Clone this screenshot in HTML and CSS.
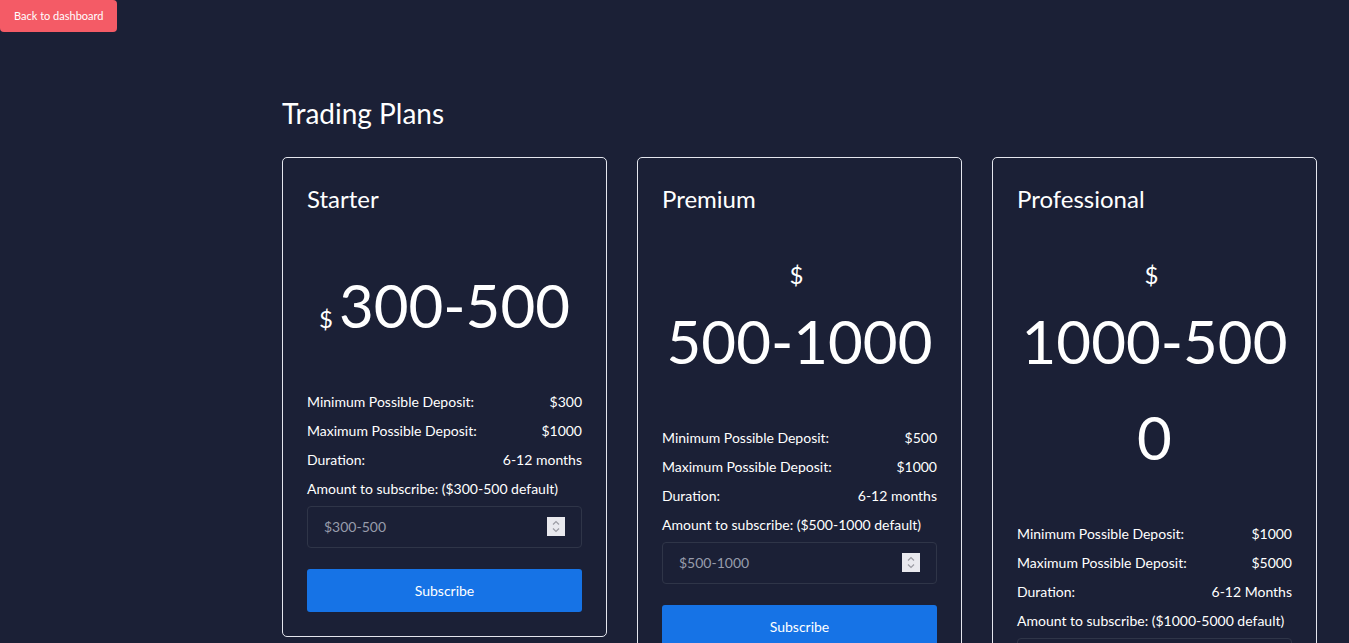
FILE: index.html
```html
<!DOCTYPE html>
<html lang="en">
<head>
<meta charset="utf-8">
<title>Trading Plans</title>
<link rel="stylesheet" href="styles.css">
</head>
<body>
<a class="back-btn" href="#">Back to dashboard</a>
<main class="plans">
  <h2 class="plans-title">Trading Plans</h2>
  <div class="plan-grid">
    <div class="plan-card">
      <h3 class="plan-name">Starter</h3>
      <div class="plan-price"><span class="currency">$</span><span class="amount">300-500</span></div>
      <div class="plan-row"><span>Minimum Possible Deposit:</span><span>$300</span></div>
      <div class="plan-row"><span>Maximum Possible Deposit:</span><span>$1000</span></div>
      <div class="plan-row"><span>Duration:</span><span>6-12 months</span></div>
      <label class="plan-label">Amount to subscribe: ($300-500 default)</label>
      <div class="input-wrap">
        <input class="plan-input" type="text" placeholder="$300-500">
        <span class="spinner"><svg width="18" height="19" viewBox="0 0 18 19"><rect width="18" height="19" fill="#e9e9ee"/><path d="M6 7.5 L9 4.5 L12 7.5" fill="none" stroke="#9b9ba3" stroke-width="1.2"/><path d="M6 11.5 L9 14.5 L12 11.5" fill="none" stroke="#9b9ba3" stroke-width="1.2"/></svg></span>
      </div>
      <button class="subscribe-btn">Subscribe</button>
    </div>
    <div class="plan-card">
      <h3 class="plan-name">Premium</h3>
      <div class="plan-price"><span class="currency">$</span><span class="amount">500-1000</span></div>
      <div class="plan-row"><span>Minimum Possible Deposit:</span><span>$500</span></div>
      <div class="plan-row"><span>Maximum Possible Deposit:</span><span>$1000</span></div>
      <div class="plan-row"><span>Duration:</span><span>6-12 months</span></div>
      <label class="plan-label">Amount to subscribe: ($500-1000 default)</label>
      <div class="input-wrap">
        <input class="plan-input" type="text" placeholder="$500-1000">
        <span class="spinner"><svg width="18" height="19" viewBox="0 0 18 19"><rect width="18" height="19" fill="#e9e9ee"/><path d="M6 7.5 L9 4.5 L12 7.5" fill="none" stroke="#9b9ba3" stroke-width="1.2"/><path d="M6 11.5 L9 14.5 L12 11.5" fill="none" stroke="#9b9ba3" stroke-width="1.2"/></svg></span>
      </div>
      <button class="subscribe-btn">Subscribe</button>
    </div>
    <div class="plan-card">
      <h3 class="plan-name">Professional</h3>
      <div class="plan-price"><span class="currency">$</span><span class="amount">1000-5000</span></div>
      <div class="plan-row"><span>Minimum Possible Deposit:</span><span>$1000</span></div>
      <div class="plan-row"><span>Maximum Possible Deposit:</span><span>$5000</span></div>
      <div class="plan-row"><span>Duration:</span><span>6-12 Months</span></div>
      <label class="plan-label">Amount to subscribe: ($1000-5000 default)</label>
      <div class="input-wrap">
        <input class="plan-input" type="text" placeholder="$1000-5000">
        <span class="spinner"><svg width="18" height="19" viewBox="0 0 18 19"><rect width="18" height="19" fill="#e9e9ee"/><path d="M6 7.5 L9 4.5 L12 7.5" fill="none" stroke="#9b9ba3" stroke-width="1.2"/><path d="M6 11.5 L9 14.5 L12 11.5" fill="none" stroke="#9b9ba3" stroke-width="1.2"/></svg></span>
      </div>
      <button class="subscribe-btn">Subscribe</button>
    </div>
  </div>
</main>
</body>
</html>
```
FILE: styles.css
```css
* { box-sizing: border-box; }
html, body { margin: 0; padding: 0; }
body {
  background: #1b2036;
  color: #ffffff;
  font-family: Lato, "Open Sans", "Liberation Sans", sans-serif;
  font-size: 14px;
  line-height: 1.5;
  min-height: 643px;
}
.back-btn {
  display: inline-block;
  height: 32px;
  line-height: 32px;
  padding: 0 14px;
  background: #f45b66;
  color: #fff;
  font-size: 11px;
  text-decoration: none;
  border-radius: 0 4px 4px 4px;
}
.plans {
  padding: 0 32px 0 282px;
}
.plans-title {
  margin: 65px 0 26px;
  font-size: 28px;
  font-weight: 400;
  line-height: 1.2;
  color: #fff;
}
.plan-grid {
  display: flex;
  gap: 30px;
  align-items: flex-start;
}
.plan-card {
  width: 325px;
  flex: 0 0 325px;
  border: 1px solid #e4e6ee;
  border-radius: 5px;
  padding: 24px;
}
.plan-name {
  margin: 0;
  font-size: 24px;
  font-weight: 400;
  line-height: 34px;
}
.plan-price {
  display: flex;
  flex-wrap: wrap;
  justify-content: center;
  align-items: baseline;
  margin: 41px 0 38px;
}
.currency {
  font-size: 24px;
  line-height: 36px;
  margin-right: 6px;
}
.amount {
  font-size: 60px;
  line-height: 96px;
  text-align: center;
  word-break: break-all;
  min-width: 0;
}
.plan-row {
  display: flex;
  justify-content: space-between;
  line-height: 21px;
  margin-bottom: 8px;
}
.plan-label {
  display: block;
  line-height: 21px;
  margin-bottom: 7px;
}
.input-wrap {
  position: relative;
}
.plan-input {
  display: block;
  width: 100%;
  height: 42px;
  background: transparent;
  border: 1px solid #2f3548;
  border-radius: 4px;
  padding: 0 16px;
  color: #fff;
  font-family: inherit;
  font-size: 14px;
  outline: none;
}
.plan-input::placeholder { color: #979cab; }
.spinner {
  position: absolute;
  right: 17px;
  top: 11px;
  width: 18px;
  height: 19px;
  display: block;
}
.spinner svg { display: block; }
.subscribe-btn {
  display: block;
  width: 100%;
  height: 43px;
  margin-top: 21px;
  background: #1673e6;
  color: #fff;
  border: none;
  border-radius: 3px;
  font-family: inherit;
  font-size: 14px;
  cursor: pointer;
}
```
